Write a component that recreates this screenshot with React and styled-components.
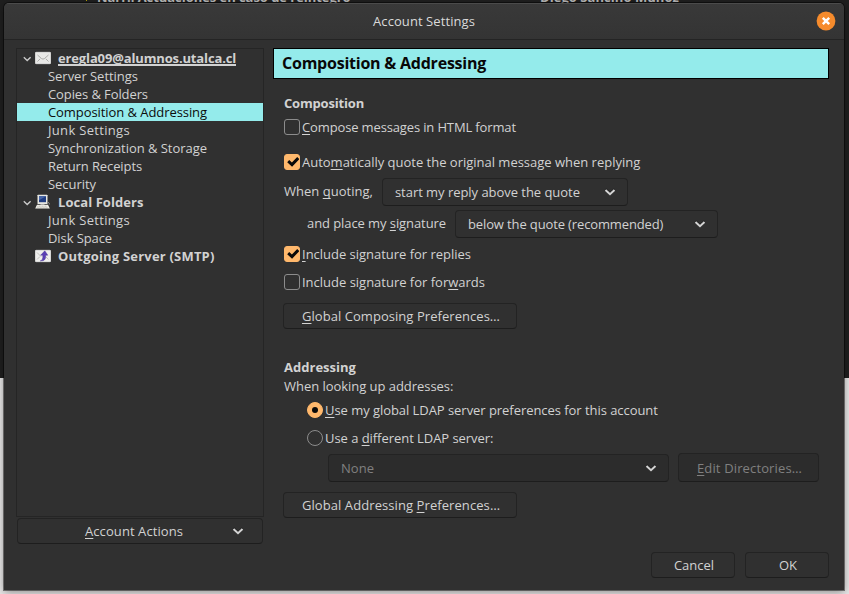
import React from 'react';
import styled, { createGlobalStyle, css } from 'styled-components';

const Global = createGlobalStyle`
  * { box-sizing: border-box; }
  body { margin: 0; overflow: hidden; font: 13px/18px "Open Sans", "Noto Sans", sans-serif; color: #d2d2d2; }
  button { font: inherit; color: inherit; }
`;

const Desktop = styled.div`
  width: 849px;
  height: 594px;
  padding: 3px 5px 4px 4px;
  overflow: hidden;
  position: relative;
  background: linear-gradient(#1f1f1f 0 378px, #e6e5e5 378px);
`;
const Behind = styled.div`
  position: absolute;
  top: -12px;
  left: ${p => p.$x}px;
  font-weight: 700;
  letter-spacing: ${p => p.$ls}px;
  white-space: nowrap;
  color: #b9b9b9;
`;
const BehindMark = styled.div`
  position: absolute;
  top: 0;
  left: 86px;
  width: 1px;
  height: 1px;
  background: #b5a200;
`;
const Window = styled.div`
  position: relative;
  width: 840px;
  height: 587px;
  display: flex;
  flex-direction: column;
  background: #303030;
  border-radius: 5px 5px 0 0;
  box-shadow: 0 0 0 1px rgba(0, 0, 0, 0.45), 0 2px 8px rgba(0, 0, 0, 0.4);
  overflow: clip;
`;
const TitleBar = styled.header`
  height: 37px;
  flex: none;
  display: grid;
  grid-template-columns: 40px 1fr 40px;
  align-items: center;
  background: linear-gradient(#393939, #343434);
  border-top: 1px solid #4b4b4b;
  border-bottom: 1px solid #242424;
`;
const Title = styled.h1`
  margin: 0;
  padding-bottom: 2px;
  grid-column: 2;
  font: inherit;
  text-align: center;
  letter-spacing: 0.08px;
  color: #dadada;
`;
const CloseButton = styled.button`
  display: flex;
  padding: 0 0 1px;
  margin-left: 12px;
  border: 0;
  background: none;
`;
const Columns = styled.div`
  display: grid;
  grid-template-columns: 248px 556px;
  column-gap: 9px;
  padding: 8px 0 0 12px;
`;
const Side = styled.nav`
  display: flex;
  flex-direction: column;
`;
const Tree = styled.ul`
  list-style: none;
  margin: 0 0 1px;
  padding: 0;
  height: 469px;
  border: 1px solid #252525;
`;
const TreeRow = styled.li`
  height: 18px;
  display: flex;
  align-items: center;
  white-space: nowrap;
  padding-left: ${p => (p.$head ? 6 : 31)}px;
  ${p => p.$head && css`font-weight: 700;`}
  ${p => p.$selected && css`background: #94ebeb; color: #0c0c0c;`}
`;
const Twisty = styled.span`
  width: 12px;
  flex: none;
  display: flex;
  padding-top: 2px;
`;
const IconSlot = styled.span`
  width: 23px;
  flex: none;
  display: flex;
`;
const Text = styled.span`
  letter-spacing: ${p => p.$ls || 0}px;
  white-space: nowrap;
`;
const AccountName = styled(Text)`
  height: 16px;
  line-height: 16px;
  border-bottom: 2px solid #d2d2d2;
`;
const Key = styled.u`
  text-decoration-thickness: 1px;
  text-underline-offset: 2px;
  text-decoration-skip-ink: none;
`;
const frame = css`
  border: 1px solid #232323;
  border-bottom-color: #1d1d1d;
  border-radius: 4px;
  background: ${p => (p.$disabled ? '#2c2c2c' : '#303030')};
  color: ${p => (p.$disabled ? '#808080' : '#d2d2d2')};
`;
const Button = styled.button`
  ${frame}
  width: ${p => p.$w}px;
  height: ${p => p.$h || 26}px;
  padding: 0 0 0 2px;
  display: flex;
  align-items: center;
  justify-content: center;
`;
const ActionsButton = styled(Button)`
  margin-left: 1px;
  padding: 0 18px 0 67px;
  justify-content: space-between;
`;
const SelectBox = styled.div`
  ${frame}
  width: ${p => p.$w}px;
  height: 28px;
  padding: 4px 11px 4px 12px;
  display: flex;
  align-items: flex-start;
  justify-content: space-between;
`;
const SelectArrow = styled.span`
  display: flex;
  padding-top: 5px;
`;
const Panel = styled.main`
  display: flex;
  flex-direction: column;
  align-items: flex-start;
`;
const Banner = styled.h2`
  margin: 0 0 15px;
  width: 556px;
  height: 31px;
  padding: 0 8px;
  border: 1px solid #000;
  background: #94ebeb;
  color: #080808;
  font-size: 16px;
  line-height: 28px;
  letter-spacing: -0.23px;
`;
const SectionTitle = styled.h3`
  margin: ${p => p.$top || 0}px 0 0 11px;
  height: 18px;
  font: inherit;
  font-weight: 700;
  letter-spacing: ${p => p.$ls}px;
`;
const Line = styled.div`
  display: flex;
  align-items: ${p => p.$align || 'center'};
  gap: ${p => p.$gap || 0}px;
  margin-top: ${p => p.$top || 0}px;
  margin-left: ${p => p.$indent || 11}px;
`;
const FieldLabel = styled(Text)`
  padding-bottom: 2px;
`;
const Choice = styled.label`
  display: flex;
  gap: 2px;
  height: 18px;
  margin-top: ${p => p.$top}px;
  margin-left: ${p => p.$indent || 11}px;
`;
const Mark = styled.span`
  width: 16px;
  height: 16px;
  margin-top: 1px;
  flex: none;
  display: flex;
  align-items: center;
  justify-content: center;
  border: 1px solid ${p => (p.$on ? '#ffb86c' : '#8c8c8c')};
  border-radius: ${p => (p.$round ? '50%' : '3px')};
  background: ${p => (p.$on ? '#ffb86c' : 'transparent')};
`;
const Dot = styled.span`
  width: 6px;
  height: 6px;
  border-radius: 50%;
  background: #0a0a0a;
`;
const Footer = styled.footer`
  display: flex;
  justify-content: flex-end;
  gap: 10px;
  margin-top: auto;
  padding: 0 15px 12px 0;
`;

const Chevron = () => (
  <svg width="12" height="8" viewBox="0 0 12 8" fill="none">
    <path d="M1.5 1.2 6 5.5l4.500-4.300" stroke="#171717" strokeWidth="2" />
    <path d="M1.500 2 6 6.200l4.500-4.200" stroke="#d4d4d4" strokeWidth="2" />
  </svg>
);
const TwistyIcon = () => (
  <svg width="9" height="6" viewBox="0 0 9 6" fill="none">
    <path d="M.8 1.2 4.200 4.500 7.600 1.200" stroke="#c9c9c9" strokeWidth="1.400" />
  </svg>
);
const Check = () => (
  <svg width="14" height="14" viewBox="0 0 14 14" fill="none">
    <path d="M3.200 6.200 7 9.600 13.300 3" stroke="#0a0a0a" strokeWidth="3" />
  </svg>
);
const CloseIcon = () => (
  <svg width="20" height="20" viewBox="0 0 20 20">
    <circle cx="10" cy="10" r="9.400" fill="#f68b2c" />
    <path d="m6.800 6.800 6.400 6.400m0-6.400-6.400 6.400" stroke="#fff" strokeWidth="2.400" />
  </svg>
);
const MailIcon = () => (
  <svg width="16" height="16" viewBox="0 0 16 16">
    <rect x=".3" y="2.300" width="15.400" height="11.400" rx=".8" fill="#e8e8e6" stroke="#f8f8f8" strokeWidth=".6" />
    <path d="m2.500 5 4.200 3.700q1.300.8 2.600 0L13.500 5M2.500 11.500l2.700-2.700m8.300 2.700-2.700-2.700" stroke="#a5a5a2" strokeWidth=".9" fill="none" />
  </svg>
);
const ComputerIcon = () => (
  <svg width="16" height="16" viewBox="0 0 16 16">
    <rect x="2.500" y=".7" width="10" height="9.300" rx=".6" fill="#e7e7e2" />
    <rect x="4" y="2.200" width="7" height="6" fill="#203d82" />
    <path d="m4 2.200 7 0-7 4z" fill="#4967a8" />
    <path d="M5.500 10h4v1h-4z" fill="#999" />
    <path d="M2 10.800h11l1.800 3.700H.2z" fill="#f0efe9" />
    <path d="M2.500 12.200h9.500M1.800 13.300h11" stroke="#a7a7a1" strokeWidth=".6" strokeDasharray="1 .5" />
    <path d="M13 8.200q1.800.4 1.200 2.500" stroke="#aaa" strokeWidth=".7" fill="none" />
  </svg>
);
const OutgoingIcon = () => (
  <svg width="16" height="16" viewBox="0 0 16 16">
    <rect x=".3" y="2.300" width="15.400" height="11.400" rx=".8" fill="#eeeeec" stroke="#fafafa" strokeWidth=".6" />
    <path d="m2 4.500 4 4M2 11.500l3-3m8.500 3-3-3" stroke="#b5b5b2" strokeWidth=".8" fill="none" />
    <path d="M5.200 13q2.600-.8 2.600-3.500V7.200H5.600l4.200-4.400 3 4.400h-2.200v2.300q-.4 3.600-5.400 3.500z" fill="#5a3fb5" stroke="#3e2b91" strokeWidth=".4" />
  </svg>
);

const tree = [
  { t: 'eregla09@alumnos.utalca.cl', ls: -0.14, icon: MailIcon, open: true, underlined: true },
  { t: 'Server Settings', ls: -0.03 },
  { t: 'Copies & Folders', ls: -0.1 },
  { t: 'Composition & Addressing', ls: -0.07, selected: true },
  { t: 'Junk Settings', ls: 0.32 },
  { t: 'Synchronization & Storage', ls: -0.04 },
  { t: 'Return Receipts', ls: -0.1 },
  { t: 'Security', ls: -0.05 },
  { t: 'Local Folders', ls: 0.06, icon: ComputerIcon, open: true },
  { t: 'Junk Settings', ls: 0.32 },
  { t: 'Disk Space', ls: -0.09 },
  { t: 'Outgoing Server (SMTP)', ls: 0.2, icon: OutgoingIcon },
];

const TreeItem = ({ t, ls, icon: Icon, open, underlined, selected }) => {
  const Name = underlined ? AccountName : Text;
  return (
    <TreeRow $head={!!Icon} $selected={selected}>
      {Icon && <Twisty>{open && <TwistyIcon />}</Twisty>}
      {Icon && <IconSlot><Icon /></IconSlot>}
      <Name $ls={ls}>{t}</Name>
    </TreeRow>
  );
};
const CheckRow = ({ on, top, ls, children }) => (
  <Choice $top={top}>
    <Mark $on={on}>{on && <Check />}</Mark>
    <Text $ls={ls}>{children}</Text>
  </Choice>
);
const RadioRow = ({ on, top, ls, children }) => (
  <Choice $top={top} $indent={34}>
    <Mark $on={on} $round>{on && <Dot />}</Mark>
    <Text $ls={ls}>{children}</Text>
  </Choice>
);
const Select = ({ w, ls, disabled, children }) => (
  <SelectBox $w={w} $disabled={disabled}>
    <Text $ls={ls}>{children}</Text>
    <SelectArrow><Chevron /></SelectArrow>
  </SelectBox>
);

export default function App() {
  return (
    <Desktop>
      <Global />
      <BehindMark />
      <Behind $x={97} $ls={-0.05}>Narr.: Actuaciones en caso de reintegro</Behind>
      <Behind $x={540} $ls={0.05}>Diego Sancino Muñoz</Behind>
      <Window>
        <TitleBar>
          <Title>Account Settings</Title>
          <CloseButton aria-label="Close"><CloseIcon /></CloseButton>
        </TitleBar>
        <Columns>
          <Side>
            <Tree>{tree.map((item, i) => <TreeItem key={i} {...item} />)}</Tree>
            <ActionsButton $w={246}>
              <Text $ls={0.08}><Key>A</Key>ccount Actions</Text>
              <Chevron />
            </ActionsButton>
          </Side>
          <Panel>
            <Banner>Composition &amp; Addressing</Banner>
            <SectionTitle $ls={-0.18}>Composition</SectionTitle>
            <CheckRow top={6} ls={-0.14}><Key>C</Key>ompose messages in HTML format</CheckRow>
            <CheckRow on top={17} ls={-0.01}>Auto<Key>m</Key>atically quote the original message when replying</CheckRow>
            <Line $top={7} $gap={9}>
              <FieldLabel $ls={0.02}>When <Key>q</Key>uoting,</FieldLabel>
              <Select w={246} ls={-0.04}>start my reply above the quote</Select>
            </Line>
            <Line $top={4} $gap={9} $indent={34}>
              <FieldLabel $ls={-0.08}>and place my <Key>s</Key>ignature</FieldLabel>
              <Select w={263} ls={-0.13}>below the quote (recommended)</Select>
            </Line>
            <CheckRow on top={7} ls={-0.02}><Key>I</Key>nclude signature for replies</CheckRow>
            <CheckRow top={10} ls={-0.01}>Include signature for for<Key>w</Key>ards</CheckRow>
            <Line $top={12} $indent={10}>
              <Button $w={234}><Text $ls={0.05}><Key>G</Key>lobal Composing Preferences…</Text></Button>
            </Line>
            <SectionTitle $top={29} $ls={0.02}>Addressing</SectionTitle>
            <Line $top={1}><Text $ls={-0.04}>When looking up addresses:</Text></Line>
            <RadioRow on top={6} ls={-0.05}><Key>U</Key>se my global LDAP server preferences for this account</RadioRow>
            <RadioRow top={10} ls={-0.05}>Use a <Key>d</Key>ifferent LDAP server:</RadioRow>
            <Line $top={6} $gap={9} $indent={55} $align="flex-end">
              <Select w={341} ls={0.03} disabled>None</Select>
              <Button $w={141} $h={29} $disabled><Text $ls={0.14}><Key>E</Key>dit Directories…</Text></Button>
            </Line>
            <Line $top={10} $indent={10}>
              <Button $w={234}><Text $ls={0.08}>Global Addressing <Key>P</Key>references…</Text></Button>
            </Line>
          </Panel>
        </Columns>
        <Footer>
          <Button $w={84}><Text>Cancel</Text></Button>
          <Button $w={84}><Text>OK</Text></Button>
        </Footer>
      </Window>
    </Desktop>
  );
}
